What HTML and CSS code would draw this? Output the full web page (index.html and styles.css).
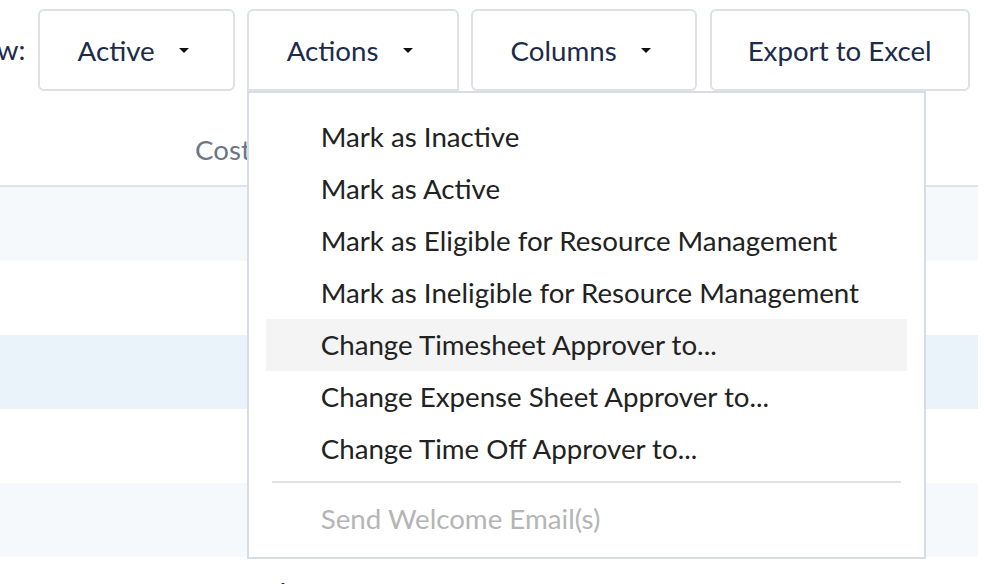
FILE: index.html
```html
<!DOCTYPE html>
<html lang="en">
<head>
    <meta charset="UTF-8">
    <meta name="viewport" content="width=device-width, initial-scale=1.0">
    <title>Staff</title>
    <link rel="stylesheet" href="styles.css">
</head>
<body>
    <!-- Barra de filtros y acciones -->
    <div class="toolbar">
        <span class="toolbar-label">View:</span>
        <button class="btn">Active <span class="caret"></span></button>
        <div class="dropdown">
            <button class="btn btn-open">Actions <span class="caret"></span></button>
            <ul class="menu">
                <li class="menu-item">Mark as Inactive</li>
                <li class="menu-item">Mark as Active</li>
                <li class="menu-item">Mark as Eligible for Resource Management</li>
                <li class="menu-item">Mark as Ineligible for Resource Management</li>
                <li class="menu-item is-hover">Change Timesheet Approver to...</li>
                <li class="menu-item">Change Expense Sheet Approver to...</li>
                <li class="menu-item">Change Time Off Approver to...</li>
                <li class="menu-divider"></li>
                <li class="menu-item is-disabled">Send Welcome Email(s)</li>
            </ul>
        </div>
        <button class="btn">Columns <span class="caret"></span></button>
        <button class="btn btn-plain">Export to Excel</button>
    </div>

    <!-- Tabla -->
    <div class="table">
        <div class="table-head">
            <span class="th">Cost</span>
        </div>
        <div class="row row-alt"></div>
        <div class="row"></div>
        <div class="row row-hover"></div>
        <div class="row"></div>
        <div class="row row-alt"></div>
        <div class="row row-last"><span class="td">1</span></div>
    </div>
</body>
</html>
```

FILE: styles.css
```css
html {
    height: 100%;
    overflow: hidden;
}

body {
    height: 584px;
    margin: 0;
    padding: 0;
    background: #fff;
    font-family: Lato, "Noto Sans", sans-serif;
}

.toolbar {
    display: flex;
    align-items: flex-start;
    gap: 12px;
    padding-top: 9px;
    margin-left: -43px;
}

.toolbar-label {
    font-size: 27.7px;
    color: #1c2b4a;
    line-height: 82px;
}

.btn {
    display: flex;
    align-items: center;
    height: 82px;
    padding: 0 38px;
    background: #fff;
    border: 2px solid #dde1e6;
    border-radius: 6px;
    font-family: inherit;
    font-size: 27.7px;
    color: #1c2b4a;
}

.btn-plain {
    padding: 0 36px;
    margin-left: 1px;
}

.caret {
    width: 0;
    height: 0;
    margin-left: 24px;
    margin-right: 6px;
    border-left: 5px solid transparent;
    border-right: 5px solid transparent;
    border-top: 5px solid #111;
}

.dropdown {
    position: relative;
}

.btn-open {
    border-bottom-left-radius: 0;
    border-bottom-right-radius: 0;
}

.menu {
    position: absolute;
    top: 82px;
    left: 0;
    z-index: 5;
    width: 679px;
    box-sizing: border-box;
    margin: 0;
    padding: 18px 17px 12px;
    list-style: none;
    background: #fff;
    border: 2px solid #d8dde3;
}

.menu-item {
    height: 52px;
    line-height: 52px;
    padding-left: 55px;
    font-size: 27.7px;
    color: #222;
    white-space: nowrap;
}

.menu-item.is-hover {
    background: #f4f4f4;
}

.menu-item.is-disabled {
    color: #b5b5b5;
}

.menu-divider {
    height: 2px;
    margin: 6px 6px 10px;
    background: #e2e2e2;
}

.table {
    width: 978px;
}

.table-head {
    height: 96px;
    box-sizing: border-box;
    padding: 44px 0 0 195px;
    border-bottom: 2px solid #dfe3e8;
}

.th {
    font-size: 27.7px;
    line-height: 30px;
    color: #6b7686;
}

.row {
    height: 74px;
    background: #fff;
}

.row-alt {
    background: #f5f9fb;
}

.row-hover {
    background: #ebf3fa;
}

.row-last {
    box-sizing: border-box;
    padding: 20px 0 0 274px;
}

.td {
    font-size: 27.7px;
    line-height: 30px;
    color: #1c2b4a;
}
```
